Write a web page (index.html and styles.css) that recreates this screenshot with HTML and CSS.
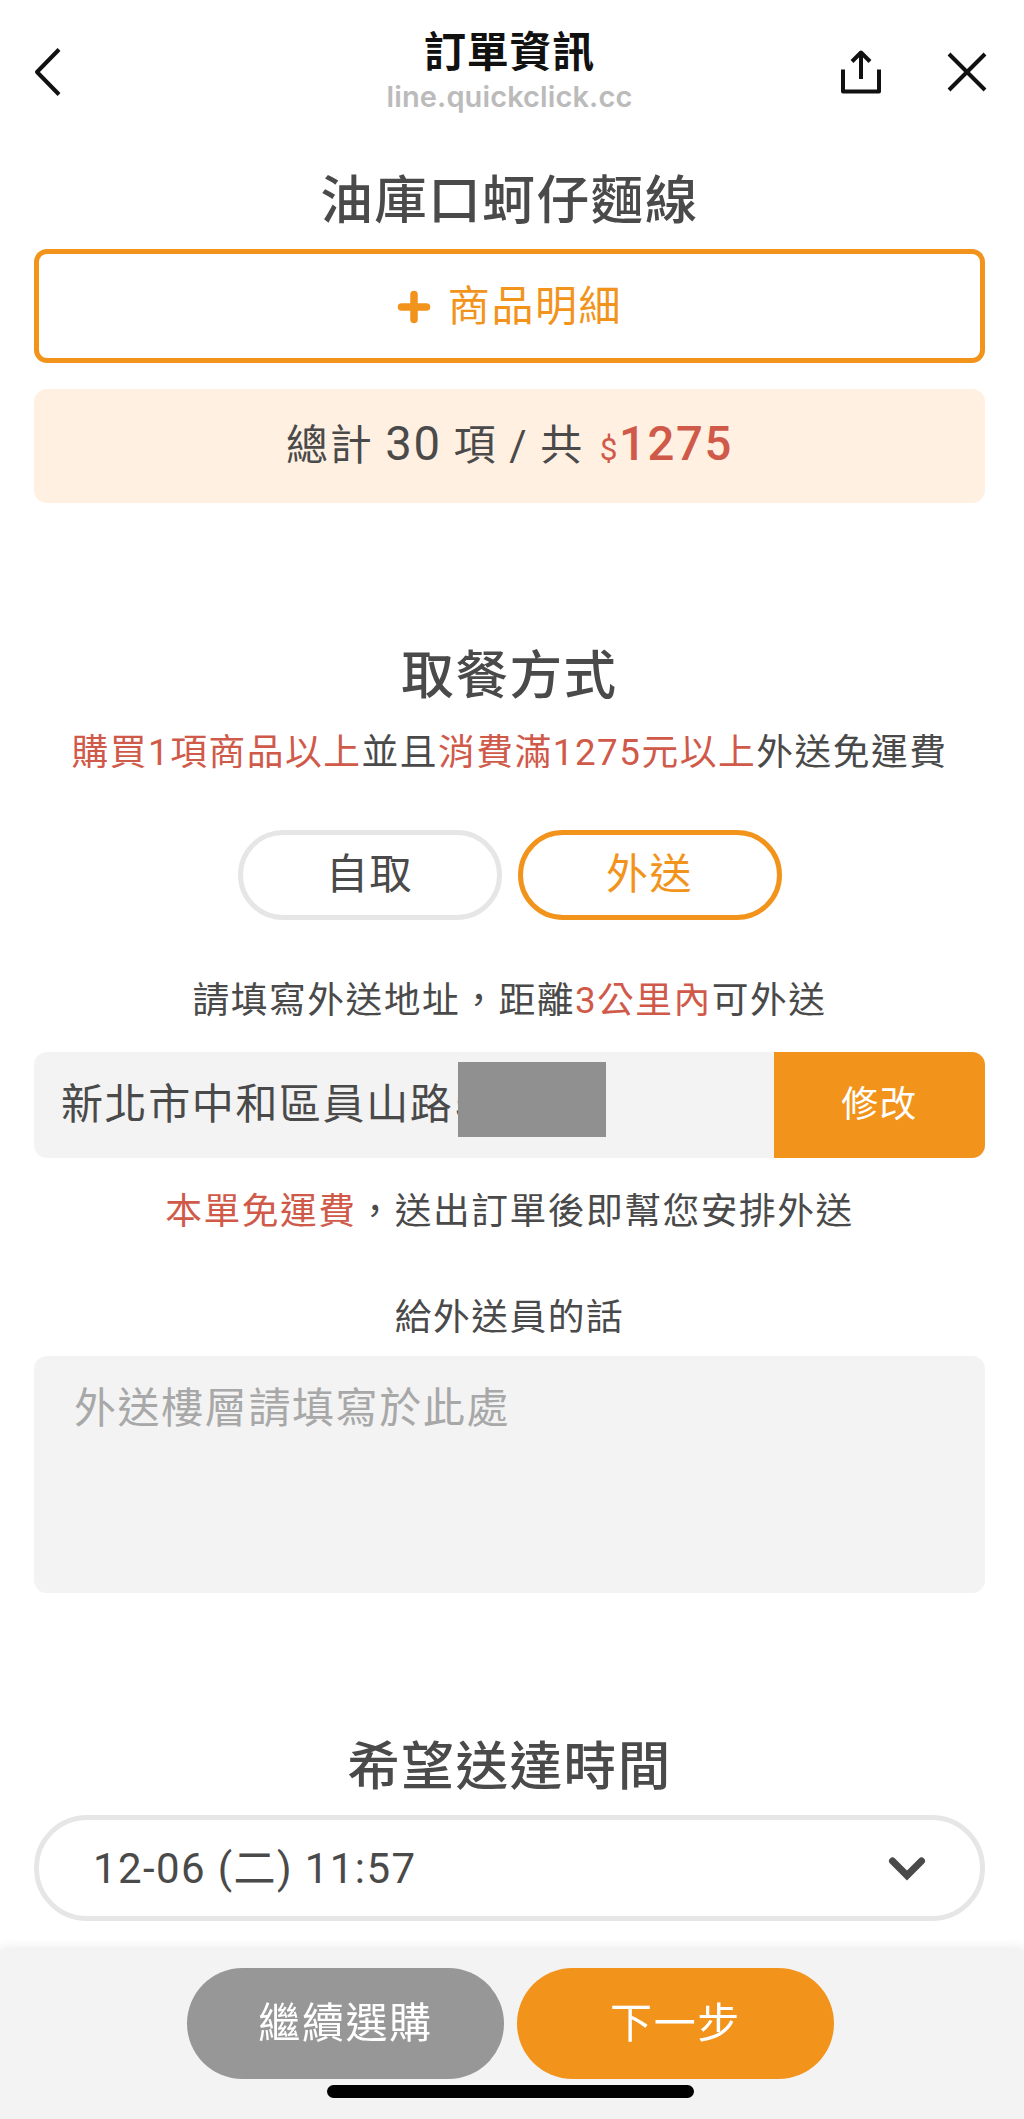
FILE: index.html
```html
<!DOCTYPE html>
<html lang="zh-Hant">
<head>
  <meta charset="UTF-8" />
  <title>訂單資訊</title>
  <link rel="stylesheet" href="styles.css">
</head>
<body>
  <header class="topbar">
    <svg class="icon-back" width="30" height="52" viewBox="0 0 30 52"><path d="M27 3.5 L5 26 L27 48.5" /></svg>
    <div class="topbar-title">
      <h1>訂單資訊</h1>
      <span class="url">line.quickclick.cc</span>
    </div>
    <div class="topbar-actions">
      <svg width="44" height="48" viewBox="0 0 44 48">
        <path d="M4 21.5 V43.5 H40 V21.5" />
        <path d="M22 31 V4 M13 13.5 L22 4.5 L31 13.5" />
      </svg>
      <svg width="44" height="48" viewBox="0 0 44 48"><path d="M4 6 L40 42 M40 6 L4 42" /></svg>
    </div>
  </header>

  <main class="container">
    <h2>油庫口蚵仔麵線</h2>
    <button class="detail-btn">
      <svg width="34" height="34" viewBox="0 0 34 34"><path d="M17 4.5 V29.5 M4.5 17 H29.5" /></svg>
      商品明細
    </button>
    <div class="total">
      <p>總計 <span class="count">30</span> 項 / 共 <span class="dollar">$</span><span class="price">1275</span></p>
    </div>

    <h2 class="pickup-heading">取餐方式</h2>
    <p class="note"><span class="red">購買1項商品以上</span>並且<span class="red">消費滿1275元以上</span>外送免運費</p>
    <div class="methods">
      <button class="pill">自取</button>
      <button class="pill active">外送</button>
    </div>

    <p class="note">請填寫外送地址，距離<span class="red">3公里內</span>可外送</p>
    <div class="address">
      <div class="address-text">新北市中和區員山路5<span class="mask"></span></div>
      <button class="edit-btn">修改</button>
    </div>
    <p class="note fee-note"><span class="red">本單免運費</span>，送出訂單後即幫您安排外送</p>

    <label class="note message-label" for="message">給外送員的話</label>
    <textarea id="message" placeholder="外送樓層請填寫於此處"></textarea>

    <h2 class="time-heading">希望送達時間</h2>
    <div class="time-select">
      <span>12-06 (二) 11:57</span>
      <svg width="38" height="26" viewBox="0 0 38 26"><path d="M4.5 5 L19 19.5 L33.5 5" /></svg>
    </div>
  </main>

  <footer class="bottom-bar">
    <div class="bottom-buttons">
      <button class="back-btn">繼續選購</button>
      <button class="next-btn">下一步</button>
    </div>
    <div class="home-indicator"></div>
  </footer>
</body>
</html>
```
FILE: styles.css
```css
* {
  box-sizing: border-box;
}

body {
  margin: 0;
  background: #fff;
  color: #4a4a4a;
  font-family: Roboto, "Noto Sans CJK TC", sans-serif;
  font-size: 42px;
  letter-spacing: 1.6px;
  overflow: hidden;
}

h1, h2, p {
  margin: 0;
}

button {
  border: none;
  padding: 0;
  font: inherit;
  line-height: 60px;
  letter-spacing: inherit;
  color: #fff;
  cursor: pointer;
}

svg {
  display: block;
  fill: none;
  stroke: currentColor;
}

/* top bar */
.topbar {
  display: flex;
  justify-content: space-between;
  height: 171px;
  padding: 22px 35px 0 32px;
  color: #111;
}

.topbar svg {
  stroke-width: 4;
  stroke-linejoin: round;
}

.icon-back {
  margin-top: 24px;
}

.topbar-title {
  margin-left: 118px;
  text-align: center;
}

.topbar h1 {
  font-size: 42px;
  line-height: 61px;
  font-weight: 700;
  letter-spacing: 0.8px;
}

.url {
  display: block;
  font-family: Inter, sans-serif;
  font-size: 29px;
  font-weight: 600;
  line-height: 28px;
  letter-spacing: 0.1px;
  color: #bbb;
}

.topbar-actions {
  display: flex;
  gap: 62px;
  margin-top: 26px;
}

/* content */
.container {
  padding: 0 39px 0 34px;
}

h2 {
  font-size: 52.5px;
  font-weight: 500;
  line-height: 60px;
  text-align: center;
}

.detail-btn {
  display: flex;
  justify-content: center;
  align-items: center;
  gap: 17px;
  width: 100%;
  height: 114px;
  margin-top: 18px;
  padding-top: 1px;
  background: #fff;
  border: 5px solid #f2941c;
  border-radius: 13px;
  color: #f2941c;
}

.detail-btn svg {
  stroke-width: 7.5;
  stroke-linecap: round;
}

.total {
  display: flex;
  justify-content: center;
  align-items: center;
  height: 114px;
  margin-top: 26px;
  padding-top: 2px;
  background: #fff0e1;
  border-radius: 13px;
}

.total p {
  line-height: 60px;
}

.count {
  font-size: 47.25px;
}

.dollar {
  margin-left: 4px;
  font-size: 31.5px;
  color: #d05a4a;
}

.price {
  font-size: 47.25px;
  font-weight: 500;
  color: #d05a4a;
}

.pickup-heading {
  margin-top: 143px;
}

.note {
  display: block;
  margin-top: 22px;
  font-size: 36.75px;
  line-height: 50px;
  letter-spacing: 1.5px;
  text-align: center;
  white-space: nowrap;
}

.red {
  color: #d05a4a;
}

.methods {
  display: flex;
  justify-content: center;
  gap: 16px;
  margin: 52px 0 56px;
}

.pill {
  width: 264px;
  height: 90px;
  background: #fff;
  border: 5px solid #e6e6e6;
  border-radius: 45px;
  color: #4a4a4a;
}

.pill.active {
  border-color: #f2941c;
  color: #f2941c;
}

.address {
  display: flex;
  height: 106px;
  margin-top: 26px;
  border-radius: 13px;
  overflow: hidden;
  background: #f3f3f3;
}

.address-text {
  position: relative;
  flex: 1;
  padding-left: 27px;
  line-height: 106px;
}

/* covers the rest of the street number */
.mask {
  position: absolute;
  left: 424px;
  top: 10px;
  width: 148px;
  height: 75px;
  background: #909090;
}

.edit-btn {
  width: 211px;
  background: #f2941c;
  font-size: 36.75px;
}

.fee-note {
  margin-top: 29px;
}

.message-label {
  margin-top: 56px;
}

textarea {
  display: block;
  width: 100%;
  height: 237px;
  margin-top: 13px;
  padding: 23px 40px;
  border: none;
  border-radius: 13px;
  background: #f3f3f3;
  font: inherit;
  letter-spacing: inherit;
  line-height: 60px;
  resize: none;
}

textarea::placeholder {
  color: #a8a8a8;
}

.time-heading {
  margin-top: 144px;
}

.time-select {
  display: flex;
  justify-content: space-between;
  align-items: center;
  height: 106px;
  margin-top: 18px;
  padding: 1px 54px 0;
  border: 5px solid #e6e6e6;
  border-radius: 53px;
  line-height: 60px;
  letter-spacing: 1.4px;
}

.time-select svg {
  stroke-width: 7;
  stroke-linecap: round;
}

/* bottom bar */
.bottom-bar {
  position: fixed;
  left: 0;
  right: 0;
  bottom: 0;
  height: 169px;
  padding: 18px 3px 0 0;
  background: #f3f3f3;
  box-shadow: 0 0 13px rgba(0, 0, 0, 0.12);
}

.bottom-buttons {
  display: flex;
  justify-content: center;
  gap: 13px;
}

.bottom-buttons button {
  width: 317px;
  height: 111px;
  border-radius: 56px;
}

.back-btn {
  background: #979797;
}

.next-btn {
  background: #f2941c;
}

.home-indicator {
  width: 367px;
  height: 13px;
  margin: 6px auto 0;
  border-radius: 7px;
  background: #000;
}
```
